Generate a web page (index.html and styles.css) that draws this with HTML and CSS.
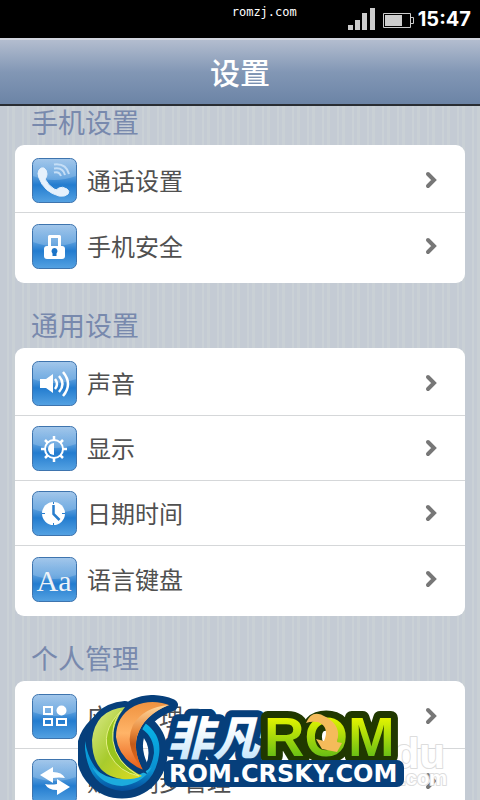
FILE: index.html
```html
<!DOCTYPE html>
<html lang="zh-CN">
<head>
<meta charset="utf-8">
<meta name="viewport" content="width=device-width, initial-scale=1">
<title>设置</title>
<link rel="stylesheet" href="styles.css">
</head>
<body>
<svg class="defs" aria-hidden="true">
  <defs>
    <linearGradient id="tile" x1="0" y1="0" x2="0" y2="1">
      <stop offset="0" stop-color="#a0c5ea"/><stop offset=".38" stop-color="#5c9fdd"/><stop offset=".6" stop-color="#237ccf"/><stop offset="1" stop-color="#55a2e2"/>
    </linearGradient>
    <linearGradient id="gloss" x1="0" y1="0" x2="0" y2="1">
      <stop offset="0" stop-color="#fff" stop-opacity=".05"/><stop offset="1" stop-color="#fff" stop-opacity=".2"/>
    </linearGradient>
    <g id="base">
      <rect x=".5" y=".5" width="44" height="44" rx="6" fill="url(#tile)" stroke="#3e74ae"/>
      <path d="M1 18Q22 26 44 18V7Q44 1 38 1H7Q1 1 1 7Z" fill="url(#gloss)"/>
    </g>
    <symbol id="chevron" viewBox="0 0 12 18"><path d="M3 3L9 9L3 15" fill="none" stroke="#777" stroke-width="4" stroke-linecap="round"/></symbol>
  </defs>
</svg>
<div class="statusbar">
  <span class="carrier">romzj.com</span>
  <svg class="signal" width="28" height="22" viewBox="0 0 28 22" aria-hidden="true"><path d="M0 17h5v5H0zM7 12h5v10H7zM14 5h5v17h-5zM22 0h5v22h-5z" fill="#ccc"/></svg>
  <svg class="battery" width="31" height="15" viewBox="0 0 31 15" aria-hidden="true"><path d="M.5.5h27v14H.5zM28 4.500h2.500v6H28" fill="none" stroke="#ccc"/><path d="M2 2h17v11H2z" fill="#ccc"/></svg>
  <time class="clock">15:47</time>
</div>
<header class="titlebar"><h1>设置</h1></header>
<main class="settings">
  <section>
    <h2>手机设置</h2>
    <ul class="card">
      <li><a href="#call"><svg class="icon" viewBox="0 0 45 45"><use href="#base"/><path d="M7 12Q9 9 12 10Q15 12 15 16Q15 19 13 21Q16 27 22 31Q24 33 27 30Q30 28 35 31Q38 33 36 36Q33 39 27 38Q12 34 7 20Q5 15 7 12Z" fill="#e6f1fc" stroke="#e6f1fc"/><path d="M22 14.500Q27 13 29 18M22 10.500Q31 9 33 17M22 6.500Q34 5 37 16" fill="none" stroke="#c5def6" stroke-width="2"/></svg><span>通话设置</span><svg class="chevron"><use href="#chevron"/></svg></a></li>
      <li><a href="#security"><svg class="icon" viewBox="0 0 45 45"><use href="#base"/><path d="M17.500 23V12.500H27.500V23" fill="none" stroke="#fff" stroke-width="3" stroke-linejoin="round"/><rect x="12" y="22" width="21" height="13" rx="3" fill="#fff"/><path d="M22.500 24a3.200 3.200 0 0 1 2 5.500V32h-4v-2.500a3.200 3.200 0 0 1 2-5.500" fill="#1c74c8"/></svg><span>手机安全</span><svg class="chevron"><use href="#chevron"/></svg></a></li>
    </ul>
  </section>
  <section>
    <h2>通用设置</h2>
    <ul class="card">
      <li><a href="#sound"><svg class="icon" viewBox="0 0 45 45"><use href="#base"/><path d="M8 18h6l7-5v19l-7-5H8z" fill="#fff"/><path d="M23 18q4 5 0 10M27 15q7 8 0 16M31 11q10 12 0 24" fill="none" stroke="#fff" stroke-width="2.500"/></svg><span>声音</span><svg class="chevron"><use href="#chevron"/></svg></a></li>
      <li><a href="#display"><svg class="icon" viewBox="0 0 45 45"><use href="#base"/><circle cx="22" cy="23" r="9" fill="none" stroke="#fff" stroke-width="2"/><path d="M22 17a6 6 0 0 0 0 12z" fill="#fff"/><path d="M22 14v-4M22 32v4M13 23H9M31 23h4M16 17l-3-3M28 17l3-3M16 29l-3 3M28 29l3 3" stroke="#fff" stroke-width="2.500"/></svg><span>显示</span><svg class="chevron"><use href="#chevron"/></svg></a></li>
      <li><a href="#date"><svg class="icon" viewBox="0 0 45 45"><use href="#base"/><circle cx="21.500" cy="22.500" r="11.500" fill="#fff"/><path d="M21.500 14v9l6 6" fill="none" stroke="#287dcd" stroke-width="2.500"/><path d="M21.500 11v2M21.500 32v2M10 22.500h3M30 22.500h3" stroke="#287dcd"/></svg><span>日期时间</span><svg class="chevron"><use href="#chevron"/></svg></a></li>
      <li><a href="#language"><svg class="icon" viewBox="0 0 45 45"><use href="#base"/><text class="letters" x="22" y="34" text-anchor="middle">Aa</text></svg><span>语言键盘</span><svg class="chevron"><use href="#chevron"/></svg></a></li>
    </ul>
  </section>
  <section>
    <h2>个人管理</h2>
    <ul class="card continued">
      <li><a href="#apps"><svg class="icon" viewBox="0 0 45 45"><use href="#base"/><path d="M12 13h8v7h-8zM12 25h8v6h-8zM25 25h9v6h-9z" fill="none" stroke="#fff" stroke-width="2"/><circle cx="29.500" cy="16.500" r="5" fill="#fff"/></svg><span>应用管理</span><svg class="chevron"><use href="#chevron"/></svg></a></li>
      <li><a href="#sync"><svg class="icon" viewBox="0 0 45 45"><use href="#base"/><path d="M8 16L21 8v5q9 0 12 6q-6-1-12 0v5zM38 28L25 36v-5q-9 0-12-6q6 1 12 0v-5z" fill="#fff"/></svg><span>账户同步管理</span><svg class="chevron"><use href="#chevron"/></svg></a></li>
    </ul>
  </section>
</main>
<div class="watermark">
<svg width="380" height="105" viewBox="0 0 380 105" role="img" aria-label="非凡ROM">
  <defs>
    <linearGradient id="lime" x1="0" y1="0" x2="0" y2="1"><stop offset=".2" stop-color="#e4f500"/><stop offset=".85" stop-color="#62bb16"/></linearGradient>
    <linearGradient id="ice" x1="0" y1="0" x2="0" y2="1"><stop offset=".35" stop-color="#fff"/><stop offset="1" stop-color="#b9e0fa"/></linearGradient>
    <linearGradient id="leaf" x1="0" y1="0" x2="1" y2="1"><stop offset="0" stop-color="#dceb8d"/><stop offset=".5" stop-color="#a8cb2d"/><stop offset="1" stop-color="#e0dc20"/></linearGradient>
    <linearGradient id="flame" x1="0" y1="0" x2="0" y2="1"><stop offset="0" stop-color="#ef913e"/><stop offset=".45" stop-color="#ffb468"/><stop offset="1" stop-color="#e65712"/></linearGradient>
    <linearGradient id="orangeShade" x1="0" y1="0" x2="0" y2="1"><stop offset="0" stop-color="#ffd9a0"/><stop offset=".4" stop-color="#e88a3c"/><stop offset=".6" stop-color="#c25a18"/><stop offset="1" stop-color="#f26a1c"/></linearGradient>
    <linearGradient id="sea" x1="0" y1="0" x2="0" y2="1"><stop offset="0" stop-color="#08b4e7"/><stop offset=".7" stop-color="#0a8fd0"/><stop offset="1" stop-color="#064d9c"/></linearGradient>
  </defs>
  <g class="faint"><text x="367" y="73" text-anchor="end" font-size="42">du</text><text x="369" y="90" text-anchor="end" font-size="20">.com</text></g>
  <g stroke="#063f7b" stroke-linejoin="round">
    <circle cx="44" cy="58" r="36" fill="none" stroke-width="19"/>
    <path d="M10 66Q20 90 44 92Q70 90 78 68L62 76L30 80Z" fill="#063f7b" stroke-width="4"/>
    <path d="M47 12Q17 15 14 45Q14 80 44 84Q55 85 64 81Q38 68 35 46Q34 28 47 12Z" fill="none" stroke-width="12"/>
    <path d="M94 10Q74 2 56 10Q37 20 37 42Q40 66 67 77Q56 58 60 42Q66 20 94 10Z" fill="none" stroke-width="12"/>
  </g>
  <path d="M67 28Q84 40 81 60Q76 94 44 96Q11 93 7 54V46Q13 82 43 88Q72 87 76 58Q76 42 64 34Z" fill="url(#sea)"/>
  <path d="M14 72Q42 96 74 72Q64 89 44 91Q23 90 14 72Z" fill="#1cabdd"/>
  <path d="M47 12Q17 15 14 45Q14 80 44 84Q55 85 64 81Q38 68 35 46Q34 28 47 12Z" fill="url(#leaf)"/>
  <path d="M43 16Q21 38 32 60Q41 77 61 81Q38 68 35 46Q33 28 43 16Z" fill="#98c41c" stroke="#e4ee83"/>
  <path d="M94 10Q74 2 56 10Q37 20 37 42Q40 66 67 77Q56 58 60 42Q66 20 94 10Z" fill="url(#flame)" stroke="#063f7b" stroke-width="2"/>
  <path d="M91 10Q66 12 55 30Q45 51 65 75Q55 57 59 41Q66 20 91 10Z" fill="url(#orangeShade)"/>
  <text class="cn" x="89" y="60">非凡</text>
  <text class="rom" x="186" y="61">ROM</text>
  <path d="M228 28Q234 13 248 22Q264 31 259 47L264 48L259 57L244 54L238 44L246 46Q252 32 240 27Q233 26 228 28Z" fill="#f5bb5a"/>
  <rect x="86" y="65" width="240" height="27" rx="7" fill="#063f7b"/>
  <text class="url" x="91" y="87">ROM.CRSKY.COM</text>
</svg>
</div>
</body>
</html>
```
FILE: styles.css
```css
* { box-sizing: border-box; }
body {
  position: relative;
  display: flex;
  flex-direction: column;
  height: 100vh;
  margin: 0;
  overflow: hidden;
  font-family: "Noto Sans CJK SC", sans-serif;
  background: repeating-linear-gradient(90deg, #c4cbd4 0 7px, #cad1d6 7px 9px, #c4cbd4 9px 12px, #c9d0d5 12px 15px);
}
h1, h2, ul { margin: 0; padding: 0; }
.defs { position: absolute; width: 0; height: 0; }
.statusbar {
  display: flex;
  flex: none;
  align-items: center;
  height: 38px;
  padding: 0 9px;
  background: #000;
  color: #fff;
}
.carrier {
  flex: 1;
  align-self: flex-start;
  padding: 4px 51px 0 0;
  text-align: right;
  font: 12px/16px "DejaVu Sans Mono", monospace;
}
.battery { margin: 2px 4px 0 7px; }
.clock { font: bold 20px/20px Inter, sans-serif; }
.titlebar {
  flex: none;
  height: 68px;
  border-top: 2px solid #d0d4de;
  border-bottom: 2px solid #292d33;
  background: linear-gradient(#b3bdcf, #8297b5 50%, #6c84a6);
  color: #fff;
  text-align: center;
}
h1 { font-size: 30px; line-height: 62px; font-weight: 500; }
.settings { padding: 0 15px; }
h2 {
  height: 65px;
  padding: 22px 16px 0;
  color: #7889ad;
  font-size: 27px;
  line-height: 40px;
  font-weight: 400;
}
section:first-child h2 { height: 39px; padding-top: 0; line-height: 32px; }
.card { overflow: hidden; border-radius: 9px; background: #fff; list-style: none; }
.card a {
  display: flex;
  align-items: center;
  gap: 10px;
  height: 65px;
  padding: 0 28px 0 17px;
  border-bottom: 1px solid #d5d7d9;
  color: #505050;
  font-size: 24px;
  line-height: 36px;
  text-decoration: none;
}
.card li:first-child a { height: 68px; padding-top: 3px; }
.card:not(.continued) li:last-child a { height: 70px; padding-bottom: 4px; border: 0; }
.icon { flex: none; width: 45px; height: 45px; }
.letters { fill: #eef3f8; font: 30px "Liberation Serif", serif; }
.chevron { width: 12px; height: 18px; margin-left: auto; }
.watermark {
  position: absolute;
  top: 695px;
  left: 78px;
  right: 0;
  overflow: hidden;
  pointer-events: none;
}
.watermark svg { display: block; overflow: visible; }
.watermark text { paint-order: stroke; stroke-linejoin: round; }
.cn { fill: url(#ice); stroke: #063f7b; stroke-width: 14px; font: italic 900 46px "Noto Sans CJK SC", sans-serif; }
.rom { fill: url(#lime); stroke: #203800; stroke-width: 14px; font: bold 56px "Liberation Sans", sans-serif; }
.url { fill: #fff; font: bold 24px "DejaVu Sans", sans-serif; }
.faint { fill: #fff; stroke: #ddd; stroke-width: 2px; font-family: "Liberation Sans", sans-serif; font-weight: bold; }
```
